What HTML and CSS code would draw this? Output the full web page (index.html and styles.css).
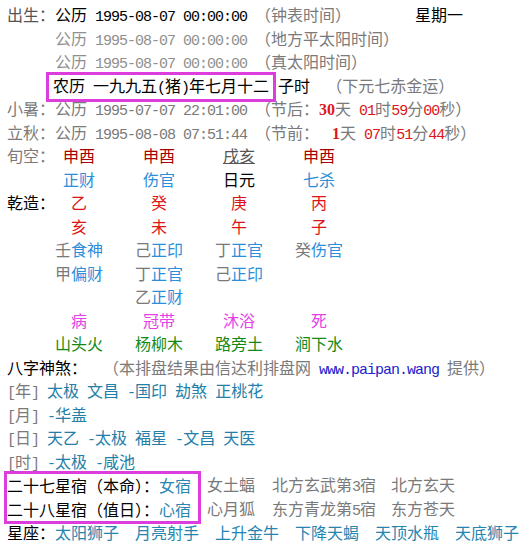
FILE: index.html
```
<!DOCTYPE html>
<html lang="zh-CN">
<head>
<meta charset="utf-8">
<title>八字排盘</title>
<link rel="stylesheet" href="styles.css">
</head>
<body>
<div class="page">
  <div class="row"><span class="lbl">出生：</span>公历<span class="m"> 1995-08-07 00:00:00 </span><span class="g">（钟表时间）</span><span class="week">星期一</span></div>
  <div class="row indent lg">公历<span class="m"> 1995-08-07 00:00:00 </span><span class="g">（地方平太阳时间）</span></div>
  <div class="row indent lg">公历<span class="m"> 1995-08-07 00:00:00 </span><span class="g">（真太阳时间）</span></div>
  <div class="row indent"><span class="box1">农历<span class="m"> </span>一九九五<span class="m">(</span>猪<span class="m">)</span>年七月十二</span>子时<span class="m">  </span><span class="g">（下元七赤金运）</span></div>
  <div class="row g">小暑：公历<span class="m"> 1995-07-07 22:01:00 </span>（节后：<b class="rb">30</b>天<span class="m"> </span><span class="m r">01</span>时<span class="m r">59</span>分<span class="m r">00</span>秒）</div>
  <div class="row g">立秋：公历<span class="m"> 1995-08-08 07:51:44 </span>（节前：<b class="rb pad1">1</b>天<span class="m"> </span><span class="m r">07</span>时<span class="m r">51</span>分<span class="m r">44</span>秒）</div>

  <div class="pan">
    <div class="lab g">旬空：</div>
    <div class="c dr">申酉</div>
    <div class="c dr">申酉</div>
    <div class="c ul">戌亥</div>
    <div class="c dr">申酉</div>

    <div class="lab"></div>
    <div class="c b">正财</div>
    <div class="c b">伤官</div>
    <div class="c">日元</div>
    <div class="c b">七杀</div>

    <div class="lab">乾造：</div>
    <div class="c r">乙</div>
    <div class="c r">癸</div>
    <div class="c r">庚</div>
    <div class="c r">丙</div>

    <div class="lab"></div>
    <div class="c r">亥</div>
    <div class="c r">未</div>
    <div class="c r">午</div>
    <div class="c r">子</div>

    <div class="lab"></div>
    <div class="c"><span class="g">壬</span><span class="b">食神</span></div>
    <div class="c"><span class="g">己</span><span class="b">正印</span></div>
    <div class="c"><span class="g">丁</span><span class="b">正官</span></div>
    <div class="c"><span class="g">癸</span><span class="b">伤官</span></div>

    <div class="lab"></div>
    <div class="c"><span class="g">甲</span><span class="b">偏财</span></div>
    <div class="c"><span class="g">丁</span><span class="b">正官</span></div>
    <div class="c"><span class="g">己</span><span class="b">正印</span></div>
    <div class="c"></div>

    <div class="lab"></div>
    <div class="c"></div>
    <div class="c"><span class="g">乙</span><span class="b">正财</span></div>
    <div class="c"></div>
    <div class="c"></div>

    <div class="lab"></div>
    <div class="c mg">病</div>
    <div class="c mg">冠带</div>
    <div class="c mg">沐浴</div>
    <div class="c mg">死</div>

    <div class="lab"></div>
    <div class="c gr">山头火</div>
    <div class="c gr">杨柳木</div>
    <div class="c gr">路旁土</div>
    <div class="c gr">涧下水</div>
  </div>

  <div class="row">八字神煞：<span class="m">  </span><span class="g">（本排盘结果由信达利排盘网<span class="m"> </span><span class="m url">www.paipan.wang</span><span class="m"> </span>提供）</span></div>
  <div class="row ss"><span class="g"><span class="m">[</span>年<span class="m">]</span></span><span class="t">太极</span><span class="t">文昌</span><span class="t"><span class="m">-</span>国印</span><span class="t">劫煞</span><span class="t">正桃花</span></div>
  <div class="row ss"><span class="g"><span class="m">[</span>月<span class="m">]</span></span><span class="t"><span class="m">-</span>华盖</span></div>
  <div class="row ss"><span class="g"><span class="m">[</span>日<span class="m">]</span></span><span class="t">天乙</span><span class="t"><span class="m">-</span>太极</span><span class="t">福星</span><span class="t"><span class="m">-</span>文昌</span><span class="t">天医</span></div>
  <div class="row ss"><span class="g"><span class="m">[</span>时<span class="m">]</span></span><span class="t"><span class="m">-</span>太极</span><span class="t"><span class="m">-</span>咸池</span></div>

  <div class="xiu">
    <div class="box2">
      <div class="row">二十七星宿（本命）：<span class="t2">女宿</span></div>
      <div class="row">二十八星宿（值日）：<span class="t2">心宿</span></div>
    </div>
    <div class="xrest g">
      <div class="row"><span>女土蝠</span><span class="x2">北方玄武第<span class="m">3</span>宿</span><span class="x3">北方玄天</span></div>
      <div class="row"><span>心月狐</span><span class="x2">东方青龙第<span class="m">5</span>宿</span><span class="x3">东方苍天</span></div>
    </div>
  </div>

  <div class="row stars">星座：<span>太阳狮子</span><span>月亮射手</span><span>上升金牛</span><span>下降天蝎</span><span>天顶水瓶</span><span>天底狮子</span></div>
</div>
</body>
</html>
```

FILE: styles.css
```
html, body {
  margin: 0;
  padding: 0;
  background: #ffffff;
}

body {
  font-family: "Noto Sans CJK SC", "Noto Sans", sans-serif;
  font-size: 16px;
  color: #000000;
}

.page {
  padding: 3px 0 0 7px;
}

.row {
  height: 23.5px;
  line-height: 23.5px;
  white-space: pre;
}

.indent {
  padding-left: 48px;
}

.m {
  font-family: "Liberation Mono", monospace;
  font-size: 15px;
  letter-spacing: -1px;
}

.lbl {
  color: #555555;
}

.g {
  color: #7a7a7a;
}

.lg {
  color: #8f8f8f;
}

.week {
  margin-left: 64px;
  color: #000000;
}

.box1 {
  display: inline-block;
  border: 3px solid #dd3ddd;
  line-height: 21px;
  margin: -2px 2px -2px -9px;
  padding: 0 4px 0 4px;
  vertical-align: middle;
  color: #000000;
}

.rb {
  font-family: "Liberation Serif", serif;
  font-weight: bold;
  color: #e01818;
}

.pad1 {
  padding-left: 13px;
}

.r {
  color: #dd1515;
}

.dr {
  color: #a80000;
}

.b {
  color: #2b8edb;
}

.ul {
  color: #555555;
  text-decoration: underline;
}

.mg {
  color: #e63fe6;
}

.gr {
  color: #148a14;
}

.pan {
  display: grid;
  grid-template-columns: 32px 80px 80px 80px 80px;
  grid-auto-rows: 23.5px;
  line-height: 23.5px;
}

.lab {
  white-space: nowrap;
  overflow: visible;
}

.c {
  text-align: center;
  white-space: nowrap;
}

.url {
  color: #2222cc;
}

.ss .t {
  color: #2480a8;
  margin-left: 8px;
}

.xiu {
  display: flex;
}

.box2 {
  border: 3px solid #dd3ddd;
  margin: -2px 0 -3px -3px;
  padding: 0 7px 0 0;
}

.t2 {
  color: #2a86b3;
}

.xrest {
  margin-left: 6px;
}

.x2 {
  margin-left: 17px;
}

.x3 {
  margin-left: 15px;
}

.stars span {
  color: #2585b0;
  margin-right: 16px;
}
```
